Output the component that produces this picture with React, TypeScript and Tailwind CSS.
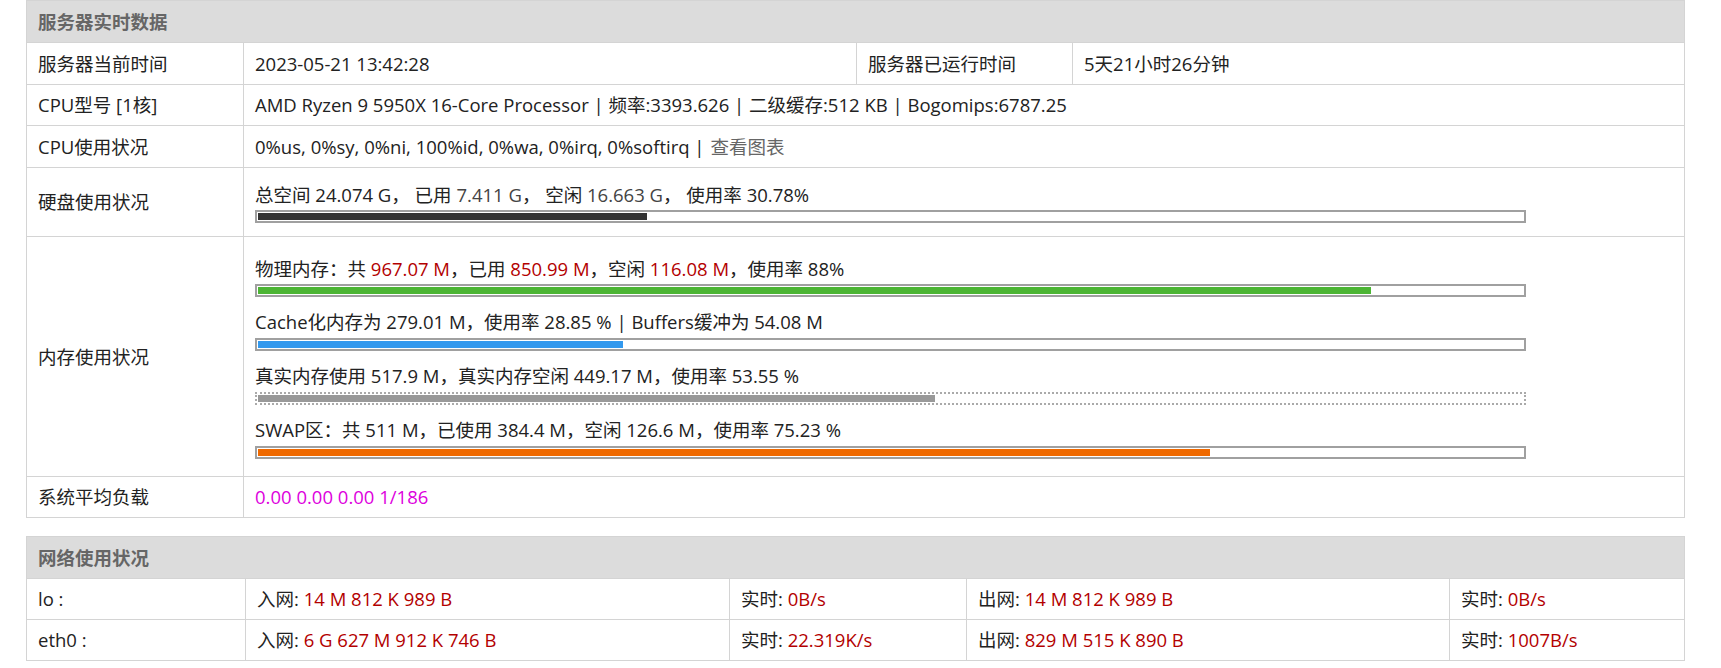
import React from "react";

const R = ({ children }: { children: React.ReactNode }) => <span className="text-[#b30000]">{children}</span>;

function Bar({ pct, color, dotted }: { pct: number; color: string; dotted?: boolean }) {
  return (
    <div className={`w-[1271px] h-[13px] bg-white p-[1px] ${dotted ? "border-2 border-dotted border-[#aaa]" : "border-2 border-[#a0a0a0]"}`}>
      <div className={`h-full ${color}`} style={{ width: `${pct}%` }} />
    </div>
  );
}

const Label = ({ children, h }: { children: React.ReactNode; h: string }) => (
  <div className={`w-[217px] shrink-0 border-r border-[#d4d4d4] px-[11px] flex items-center ${h}`}>{children}</div>
);

export default function App() {
  return (
    <div className="min-h-[668px] bg-white text-[18.5px] text-[#222] pl-[26px] w-[1721px]" style={{ fontFamily: '"Open Sans", "Noto Sans CJK SC", sans-serif' }}>
      <div className="w-[1659px] border border-[#d4d4d4]">
        <div className="h-[41px] bg-[#dcdcdc] flex items-center px-[11px] font-bold text-[#666]">服务器实时数据</div>
        <div className="flex border-t border-[#d4d4d4] h-[42px]">
          <Label h="h-full">服务器当前时间</Label>
          <div className="w-[613px] border-r border-[#d4d4d4] px-[11px] flex items-center">2023-05-21 13:42:28</div>
          <div className="w-[216px] border-r border-[#d4d4d4] px-[11px] flex items-center">服务器已运行时间</div>
          <div className="flex-1 px-[11px] flex items-center">5天21小时26分钟</div>
        </div>
        <div className="flex border-t border-[#d4d4d4] h-[41px]">
          <Label h="h-full">CPU型号 [1核]</Label>
          <div className="flex-1 px-[11px] flex items-center">AMD Ryzen 9 5950X 16-Core Processor | 频率:3393.626 | 二级缓存:512 KB | Bogomips:6787.25</div>
        </div>
        <div className="flex border-t border-[#d4d4d4] h-[42px]">
          <Label h="h-full">CPU使用状况</Label>
          <div className="flex-1 px-[11px] flex items-center">0%us, 0%sy, 0%ni, 100%id, 0%wa, 0%irq, 0%softirq |<span className="text-[#666] ml-[6px]">查看图表</span></div>
        </div>
        <div className="flex border-t border-[#d4d4d4] h-[69px]">
          <Label h="h-full">硬盘使用状况</Label>
          <div className="flex-1 px-[11px] flex flex-col justify-center gap-[2px]">
            <div>总空间 24.074 G， 已用 <span className="text-[#444]">7.411 G</span>， 空闲 <span className="text-[#444]">16.663 G</span>， 使用率 30.78%</div>
            <Bar pct={30.78} color="bg-[#333]" />
          </div>
        </div>
        <div className="flex border-t border-[#d4d4d4] h-[240px]">
          <Label h="h-full">内存使用状况</Label>
          <div className="flex-1 px-[11px] flex flex-col justify-center gap-[11px]">
            <div className="flex flex-col gap-[2px]">
              <div>物理内存：共 <R>967.07 M</R>，已用 <R>850.99 M</R>，空闲 <R>116.08 M</R>，使用率 88%</div>
              <Bar pct={88} color="bg-[#4cb534]" />
            </div>
            <div className="flex flex-col gap-[2px]">
              <div>Cache化内存为 279.01 M，使用率 28.85 % | Buffers缓冲为 54.08 M</div>
              <Bar pct={28.85} color="bg-[#3399ee]" />
            </div>
            <div className="flex flex-col gap-[2px]">
              <div>真实内存使用 517.9 M，真实内存空闲 449.17 M，使用率 53.55 %</div>
              <Bar pct={53.55} color="bg-[#999]" dotted />
            </div>
            <div className="flex flex-col gap-[2px]">
              <div>SWAP区：共 511 M，已使用 384.4 M，空闲 126.6 M，使用率 75.23 %</div>
              <Bar pct={75.23} color="bg-[#f06a00]" />
            </div>
          </div>
        </div>
        <div className="flex border-t border-[#d4d4d4] h-[41px]">
          <Label h="h-full">系统平均负载</Label>
          <div className="flex-1 px-[11px] flex items-center text-[#dd00dd]">0.00 0.00 0.00 1/186</div>
        </div>
      </div>
      <div className="w-[1659px] border border-[#d4d4d4] mt-[18px]">
        <div className="h-[41px] bg-[#dcdcdc] flex items-center px-[11px] font-bold text-[#666]">网络使用状况</div>
        {[
          ["lo :", "14 M 812 K 989 B", "0B/s", "14 M 812 K 989 B", "0B/s"],
          ["eth0 :", "6 G 627 M 912 K 746 B", "22.319K/s", "829 M 515 K 890 B", "1007B/s"],
        ].map((r) => (
          <div key={r[0]} className="flex border-t border-[#d4d4d4] h-[41px]">
            <div className="w-[219px] border-r border-[#d4d4d4] px-[11px] flex items-center">{r[0]}</div>
            <div className="w-[484px] border-r border-[#d4d4d4] px-[11px] flex items-center">入网:&nbsp;<R>{r[1]}</R></div>
            <div className="w-[237px] border-r border-[#d4d4d4] px-[11px] flex items-center">实时:&nbsp;<R>{r[2]}</R></div>
            <div className="w-[483px] border-r border-[#d4d4d4] px-[11px] flex items-center">出网:&nbsp;<R>{r[3]}</R></div>
            <div className="flex-1 px-[11px] flex items-center">实时:&nbsp;<R>{r[4]}</R></div>
          </div>
        ))}
      </div>
    </div>
  );
}
